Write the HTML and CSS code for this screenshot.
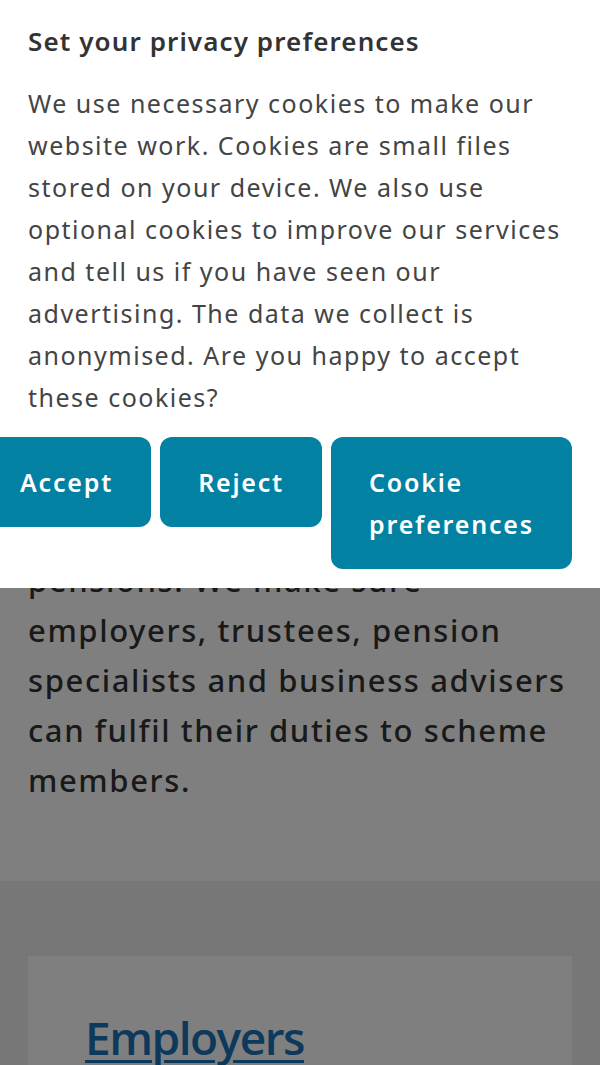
FILE: index.html
```html
<!DOCTYPE html>
<html lang="en">
<head>
<meta charset="utf-8">
<title>The Pensions Regulator</title>
<link rel="stylesheet" href="styles.css">
</head>
<body>
<main class="page">
  <section class="hero">
    <h1 class="hero-title">The Pensions Regulator</h1>
    <p class="hero-text">We protect savers' money in workplace<br>pensions. We make sure employers, trustees, pension specialists and business advisers can fulfil their duties to scheme members.</p>
  </section>
  <section class="audiences">
    <div class="card">
      <a class="card-link" href="#">Employers</a>
    </div>
  </section>
</main>

<div class="overlay"></div>

<div class="cookie-banner" role="dialog" aria-label="Cookie consent">
  <h2 class="cookie-title">Set your privacy preferences</h2>
  <p class="cookie-text">We use necessary cookies to make our website work. Cookies are small files stored on your device. We also use optional cookies to improve our services and tell us if you have seen our advertising. The data we collect is anonymised. Are you happy to accept these cookies?</p>
  <div class="cookie-actions">
    <button class="btn">Accept</button>
    <button class="btn">Reject</button>
    <button class="btn">Cookie preferences</button>
  </div>
</div>
</body>
</html>
```

FILE: styles.css
```css
* { box-sizing: border-box; }

html, body {
  margin: 0;
  padding: 0;
}

body {
  font-family: "Noto Sans", "Open Sans", "DejaVu Sans", sans-serif;
  color: #333;
  background: #fff;
  overflow: hidden;
}

.page {
  width: 600px;
}

.hero {
  background: #fff;
  padding: 385px 28px 76px;
}

.hero-title {
  margin: 0 0 20px;
  font-size: 40px;
  line-height: 50px;
  font-weight: 600;
}

.hero-text {
  margin: 0;
  font-size: 31px;
  line-height: 50px;
  font-weight: 500;
  letter-spacing: 1.6px;
  color: #333;
}

.audiences {
  background: #eee;
  padding: 75px 28px 200px;
}

.card {
  background: #fff;
  padding: 53px 57px 60px;
}

.card-link {
  font-family: "Open Sans", sans-serif;
  font-size: 46px;
  line-height: 56px;
  font-weight: 600;
  letter-spacing: -1.5px;
  color: #1872b8;
  text-decoration: underline;
  text-decoration-thickness: 3px;
  text-underline-offset: 5px;
}

.overlay {
  position: fixed;
  inset: 0;
  background: rgba(0, 0, 0, 0.5);
  z-index: 10;
}

.cookie-banner {
  position: fixed;
  top: 0;
  left: 0;
  right: 0;
  z-index: 20;
  background: #fff;
  padding: 23px 28px 19px;
}

.cookie-title {
  margin: 0 0 23px;
  font-size: 26px;
  line-height: 36px;
  font-weight: 600;
  letter-spacing: 1.1px;
  color: #333;
}

.cookie-text {
  margin: 0 0 19px;
  font-size: 25px;
  line-height: 42px;
  font-weight: 400;
  letter-spacing: 1.5px;
  color: #444;
}

.cookie-actions {
  display: flex;
  align-items: flex-start;
  gap: 9px;
  margin-left: -46px;
}

.btn {
  font-family: inherit;
  font-size: 25px;
  line-height: 42px;
  font-weight: 600;
  letter-spacing: 1.8px;
  color: #fff;
  background: #0281a2;
  border: 0;
  border-radius: 12px;
  padding: 24px 38px;
  text-align: left;
}
```
